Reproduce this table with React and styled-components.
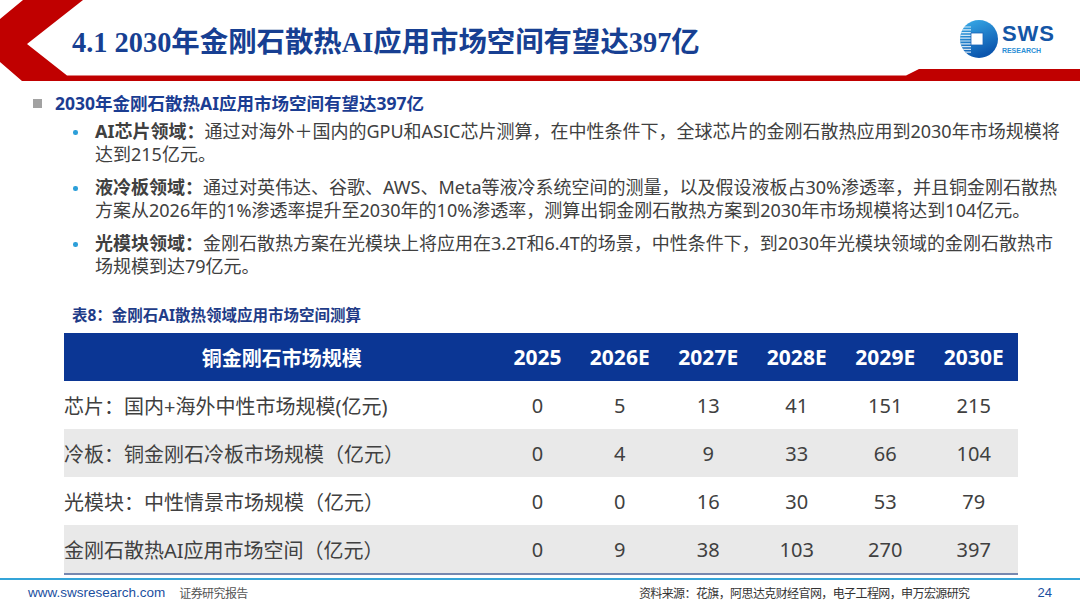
import React from 'react';
import styled, { createGlobalStyle, css } from 'styled-components';

const sans = `"Noto Sans", "Noto Sans CJK SC", sans-serif`;
const serif = `"Liberation Serif", "Noto Sans CJK SC", serif`;
const narrow = `"Liberation Sans", "Noto Sans CJK SC", sans-serif`;

const GlobalStyle = createGlobalStyle`
  html, body {
    margin: 0;
    padding: 0;
    background: #ffffff;
  }
  body {
    font-family: ${sans};
  }
`;

const Page = styled.div`
  width: 1080px;
  height: 608px;
  overflow: hidden;
  display: flex;
  flex-direction: column;
  background: #ffffff;
`;

const Header = styled.header`
  display: grid;
  height: 81px;
  flex: none;
  & > * {
    grid-area: 1 / 1;
  }
`;

const HeaderContent = styled.div`
  display: flex;
  align-items: flex-start;
  justify-content: space-between;
  padding: 0 25px 0 72px;
`;

const Title = styled.h1`
  margin: 25px 0 0;
  font-family: ${serif};
  font-size: 28.4px;
  font-weight: 700;
  line-height: 36px;
  color: #173f92;
  white-space: nowrap;
`;

const Logo = styled.div`
  display: flex;
  align-items: flex-start;
  gap: 3px;
  margin-top: 19px;
`;

const LogoText = styled.div`
  display: flex;
  flex-direction: column;
  padding-top: 6px;
  font-family: ${narrow};
  font-weight: 700;
`;

const LogoName = styled.span`
  font-size: 22px;
  line-height: 18px;
  letter-spacing: 1px;
  color: #1456a6;
`;

const LogoSub = styled.span`
  margin-top: 4px;
  font-size: 7px;
  line-height: 7px;
  color: #2b8fd6;
`;

const Heading = styled.div`
  display: flex;
  align-items: center;
  gap: 13px;
  margin: 11px 0 0 33px;
  font-size: 17.5px;
  font-weight: 700;
  line-height: 22px;
  color: #1b3d92;
  white-space: nowrap;
`;

const Square = styled.span`
  width: 9px;
  height: 9px;
  background: #a2a2a2;
  flex: none;
`;

const List = styled.ul`
  list-style: none;
  margin: 6px 0 0 73px;
  padding: 0;
  display: flex;
  flex-direction: column;
  gap: 11px;
`;

const Item = styled.li`
  display: flex;
  align-items: flex-start;
`;

const Dot = styled.span`
  flex: none;
  width: 4.5px;
  height: 4.5px;
  border-radius: 50%;
  background: #2c9fd9;
  margin: 10px 17.5px 0 0;
`;

const ItemText = styled.p`
  margin: 0;
  font-size: 18px;
  line-height: 22.5px;
  color: #404040;
  white-space: nowrap;
  b {
    font-weight: 700;
  }
`;

const Caption = styled.div`
  margin: 28px 0 0 72px;
  font-size: 15.5px;
  font-weight: 700;
  line-height: 20px;
  color: #1f3c88;
  white-space: nowrap;
`;

const Table = styled.div`
  margin: 8px 0 0 64px;
  width: 954px;
  border-bottom: 2px solid #7688b0;
`;

const Row = styled.div`
  display: grid;
  grid-template-columns: 435.5px 76px repeat(5, 88.5px);
  align-items: center;
  height: 48px;
  background: #ffffff;
  color: #404040;
  font-size: 20px;
  ${p => p.$shade && css`
    background: #e9e9e9;
  `}
  ${p => p.$head && css`
    background: #0b3694;
    color: #ffffff;
    font-weight: 700;
  `}
`;

const Cell = styled.div`
  text-align: center;
  white-space: nowrap;
  ${p => p.$label && css`
    text-align: left;
  `}
  ${p => p.$year && css`
    font-size: 21px;
  `}
`;

const FooterLine = styled.div`
  margin-top: 3px;
  height: 2px;
  background: #34a4d8;
  flex: none;
`;

const Footer = styled.footer`
  display: flex;
  align-items: center;
  height: 24px;
  padding: 0 28px;
  font-family: ${narrow};
`;

const Url = styled.span`
  font-size: 13.5px;
  color: #1b4fa0;
`;

const Small = styled.span`
  font-size: 12px;
  letter-spacing: -0.6px;
  color: ${p => p.$dark ? '#333333' : '#555555'};
  margin-left: ${p => p.$gap || 0}px;
`;

const Source = styled(Small)`
  margin-left: auto;
  margin-right: 68px;
`;

const PageNum = styled.span`
  font-size: 13px;
  color: #1b4fa0;
`;

function Decoration() {
  return (
    <svg width="1080" height="81" viewBox="0 0 1080 81">
      <path
        d="M23 0 L83 0 L27 44 L67 75.5 L906 75.5 L919 69 L1080 69 L1080 81 L22 81 L0 62 L0 19 Z"
        fill="#c00000"
      />
    </svg>
  );
}

function LogoMark() {
  const lines = [8, 10.8, 13.6, 16.4, 19.2, 22, 24.8, 27.6, 30.4, 33.2];
  return (
    <svg width="40" height="40" viewBox="0 0 40 40">
      <defs>
        <linearGradient id="swsGrad" x1="0" y1="0" x2="0.4" y2="1">
          <stop offset="0" stopColor="#3aaeea" />
          <stop offset="1" stopColor="#0b56ae" />
        </linearGradient>
        <clipPath id="swsClip">
          <circle cx="20" cy="20" r="19" />
        </clipPath>
      </defs>
      <circle cx="20" cy="20" r="19" fill="url(#swsGrad)" />
      <g clipPath="url(#swsClip)" stroke="#ffffff" strokeOpacity="0.8" strokeWidth="1.2">
        {lines.map(y => (
          <line key={y} x1="0" y1={y} x2="12" y2={y} />
        ))}
      </g>
      <rect x="12" y="14" width="12" height="12" fill="#ffffff" stroke="#1a64b8" strokeWidth="0.8" />
    </svg>
  );
}

const years = ['2025', '2026E', '2027E', '2028E', '2029E', '2030E'];

const rows = [
  { label: '芯片：国内+海外中性市场规模(亿元)', values: [0, 5, 13, 41, 151, 215] },
  { label: '冷板：铜金刚石冷板市场规模（亿元）', values: [0, 4, 9, 33, 66, 104] },
  { label: '光模块：中性情景市场规模（亿元）', values: [0, 0, 16, 30, 53, 79] },
  { label: '金刚石散热AI应用市场空间（亿元）', values: [0, 9, 38, 103, 270, 397] },
];

export default function App() {
  return (
    <Page>
      <GlobalStyle />
      <Header>
        <Decoration />
        <HeaderContent>
          <Title>4.1 2030年金刚石散热AI应用市场空间有望达397亿</Title>
          <Logo>
            <LogoMark />
            <LogoText>
              <LogoName>SWS</LogoName>
              <LogoSub>RESEARCH</LogoSub>
            </LogoText>
          </Logo>
        </HeaderContent>
      </Header>

      <Heading>
        <Square />
        2030年金刚石散热AI应用市场空间有望达397亿
      </Heading>

      <List>
        <Item>
          <Dot />
          <ItemText>
            <b>AI芯片领域：</b>通过对海外＋国内的GPU和ASIC芯片测算，在中性条件下，全球芯片的金刚石散热应用到2030年市场规模将
            <br />
            达到215亿元。
          </ItemText>
        </Item>
        <Item>
          <Dot />
          <ItemText>
            <b>液冷板领域：</b>通过对英伟达、谷歌、AWS、Meta等液冷系统空间的测量，以及假设液板占30%渗透率，并且铜金刚石散热
            <br />
            方案从2026年的1%渗透率提升至2030年的10%渗透率，测算出铜金刚石散热方案到2030年市场规模将达到104亿元。
          </ItemText>
        </Item>
        <Item>
          <Dot />
          <ItemText>
            <b>光模块领域：</b>金刚石散热方案在光模块上将应用在3.2T和6.4T的场景，中性条件下，到2030年光模块领域的金刚石散热市
            <br />
            场规模到达79亿元。
          </ItemText>
        </Item>
      </List>

      <Caption>表8：金刚石AI散热领域应用市场空间测算</Caption>

      <Table>
        <Row $head>
          <Cell>铜金刚石市场规模</Cell>
          {years.map(y => (
            <Cell key={y} $year>{y}</Cell>
          ))}
        </Row>
        {rows.map((r, i) => (
          <Row key={r.label} $shade={i % 2 === 1}>
            <Cell $label>{r.label}</Cell>
            {r.values.map((v, j) => (
              <Cell key={j}>{v}</Cell>
            ))}
          </Row>
        ))}
      </Table>

      <FooterLine />
      <Footer>
        <Url>www.swsresearch.com</Url>
        <Small $gap={14}>证券研究报告</Small>
        <Source $dark>资料来源：花旗，阿思达克财经官网，电子工程网，申万宏源研究</Source>
        <PageNum>24</PageNum>
      </Footer>
    </Page>
  );
}
